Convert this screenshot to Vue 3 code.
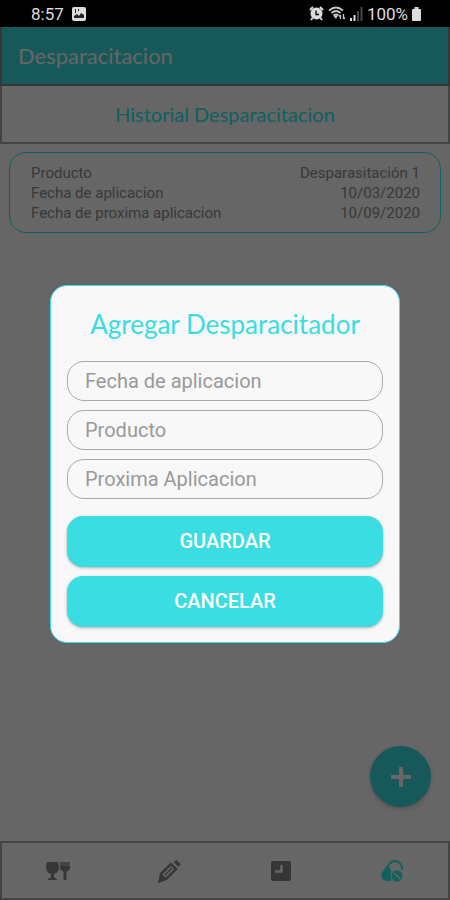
<template>
  <div class="screen">
    <div class="status-bar">
      <div class="status-left">
        <span>8:57</span>
        <svg width="14" height="14" viewBox="0 0 14 14">
          <rect width="14" height="14" rx="2" fill="#dcdcdc" />
          <path d="M2 11V9l3-2 2 2 2-3 3 2v3z" fill="#222" />
          <path d="M3 2h1v4H3zM6 2h1v2H6z" fill="#222" />
        </svg>
      </div>
      <div class="status-right">
        <svg width="15" height="15" viewBox="0 0 15 15" fill="none" stroke="#dcdcdc">
          <circle cx="7.5" cy="7.5" r="5" fill="#dcdcdc" stroke-width="2" />
          <path d="M1 4l3-3M11 1l3 3M3.5 12L2 14M11.5 12l1.500 2" stroke-width="2" />
          <path d="M7 4.500v4h3" stroke="#000" stroke-width="1.300" />
        </svg>
        <svg width="18" height="15" viewBox="0 0 18 15" fill="none" stroke="#c8c8c8" stroke-width="1.700">
          <path d="M1 4.500q7-6 14 0M3.500 7q4.500-4 9 0M5.500 9.500q2.500-2 5 0" />
          <path d="M8 13l-3-3.500h5z" fill="#c8c8c8" stroke="none" />
          <path d="M12.500 13V9M11 10.500L12.500 9M15.500 8v5M17 11.500L15.500 13" stroke-width="1.300" />
        </svg>
        <svg width="13" height="14" viewBox="0 0 13 14">
          <path d="M0 11h2v3H0zM3.500 8h2v6h-2z" fill="#dcdcdc" />
          <path d="M7 4h2v10H7zM10.500 0h2v14h-2z" fill="#484848" />
        </svg>
        <span>100%</span>
        <svg width="9" height="14" viewBox="0 0 9 14" fill="#dcdcdc">
          <path d="M2.500 0h4v2H8q1 0 1 1v10q0 1-1 1H1q-1 0-1-1V3q0-1 1-1h1.500z" />
        </svg>
      </div>
    </div>

    <div class="content">
      <header class="app-header">Desparacitacion</header>
      <h2 class="subtitle">Historial Desparacitacion</h2>

      <main class="list">
        <dl v-for="(item, i) in historial" :key="i" class="card">
          <div v-for="row in item" :key="row.label" class="card-row">
            <dt>{{ row.label }}</dt>
            <dd>{{ row.value }}</dd>
          </div>
        </dl>
        <button class="fab" aria-label="Agregar" @click="open = true">
          <svg width="20" height="20" viewBox="0 0 20 20">
            <path d="M10 0v20M0 10h20" stroke="#fff" stroke-width="4" />
          </svg>
        </button>
      </main>

      <nav class="tabs">
        <button aria-label="Comida">
          <svg width="24" height="20" viewBox="0 0 24 20" fill="currentColor">
            <path d="M1 1h11q1.500 5 .5 8-1 3-4.500 4v3.500q3 .5 3 2.500H2q0-2 3-2.500V13Q1.500 12 .5 9-.5 6 1 1z" />
            <path d="M14 4.500h10V7q0 2-3.500 3.500V19h-3v-8.500Q14 9 14 7z" />
            <path d="M14 1h10v3.500H14z" opacity="0.7" />
          </svg>
        </button>
        <button aria-label="Editar">
          <svg width="24" height="24" viewBox="0 0 24 24" fill="none" stroke="currentColor">
            <path d="M4 15L14 5l5 5L9 20l-6 2z" stroke-width="2.500" />
            <path d="M4 15l5 5-7 3zM8 16l7-7" fill="currentColor" stroke-width="1.500" />
            <path d="M18 2l4.500 4.500" stroke-width="3.500" />
          </svg>
        </button>
        <button aria-label="Citas">
          <svg width="20" height="20" viewBox="0 0 20 20">
            <rect width="20" height="20" rx="2" fill="currentColor" />
            <path d="M10.500 4v6.500H4" fill="none" stroke="#fff" stroke-width="2.500" />
          </svg>
        </button>
        <button class="active" aria-label="Desparacitacion">
          <svg width="22" height="22" viewBox="0 0 22 22">
            <path d="M8 5q2-4 6-4 6 .5 7 7v2" fill="none" stroke="currentColor" stroke-width="1.800" />
            <path d="M8 4q0 3 2 6 1 2-.5 5 0 3 1.500 5-3 1.500-6 1-4-1-4.500-5Q0 12 3 10q2-4 5-6z" fill="currentColor" />
            <circle cx="16" cy="16" r="5.500" fill="currentColor" />
            <path d="M13 13l6.500 6" stroke="#fff" stroke-width="1.500" />
          </svg>
        </button>
      </nav>

      <div v-if="open" class="overlay">
        <form class="modal" @submit.prevent="guardar">
          <h1>Agregar Desparacitador</h1>
          <div class="fields">
            <input v-model="form.fecha" type="text" placeholder="Fecha de aplicacion" aria-label="Fecha de aplicacion" />
            <input v-model="form.producto" type="text" placeholder="Producto" aria-label="Producto" />
            <input v-model="form.proxima" type="text" placeholder="Proxima Aplicacion" aria-label="Proxima Aplicacion" />
          </div>
          <div class="actions">
            <button type="submit">GUARDAR</button>
            <button type="button" @click="open = false">CANCELAR</button>
          </div>
        </form>
      </div>
    </div>
  </div>
</template>

<script setup>
import { ref, reactive } from 'vue'

const open = ref(true)
const form = reactive({ fecha: '', producto: '', proxima: '' })

function crearItem(producto, fecha, proxima) {
  return [
    { label: 'Producto', value: producto },
    { label: 'Fecha de aplicacion', value: fecha },
    { label: 'Fecha de proxima aplicacion', value: proxima }
  ]
}

const historial = ref([crearItem('Desparasitación 1', '10/03/2020', '10/09/2020')])

function guardar() {
  if (!form.producto.trim()) return
  historial.value.push(crearItem(form.producto, form.fecha, form.proxima))
  form.fecha = form.producto = form.proxima = ''
  open.value = false
}
</script>

<style>
body { margin: 0; background: #fff; }
</style>

<style scoped>
* { box-sizing: border-box; }
.screen { min-height: 100vh; display: flex; flex-direction: column; font-family: Roboto, "Liberation Sans", sans-serif; }
button { font-family: inherit; border: none; cursor: pointer; }
svg { display: block; }

.status-bar { height: 27px; padding: 0 29px 0 31px; display: flex; justify-content: space-between; align-items: center; background: #000; color: #dcdcdc; font-size: 17px; }
.status-left, .status-right { display: flex; align-items: center; }
.status-left { gap: 8px; }
.status-right { gap: 4px; }

.content { flex: 1; position: relative; display: flex; flex-direction: column; }
.app-header { height: 59px; padding: 0 16px; display: flex; align-items: center; background: #3adde1; color: #fff; border: 2px solid #888; border-top: none; font-family: Lato, sans-serif; font-size: 22px; }
.subtitle { margin: 0; height: 58px; display: flex; align-items: center; justify-content: center; border: 2px solid #aaa; border-top: none; color: #28f0ec; font-family: Lato, sans-serif; font-size: 20px; font-weight: 400; }

.list { flex: 1; padding: 8px 9px; display: flex; flex-direction: column; gap: 8px; }
.card { margin: 0; padding: 10px 20px 9px 21px; border: 1px solid #28f0ec; border-radius: 17px; color: #8c8c8c; font-size: 15px; line-height: 20px; }
.card-row { display: flex; justify-content: space-between; }
.card-row dd { margin: 0; }
.fab { margin: auto 10px 26px auto; width: 61px; height: 61px; padding: 0; border-radius: 50%; display: flex; align-items: center; justify-content: center; background: #3adde1; box-shadow: 0 2px 5px rgba(0, 0, 0, 0.2); }

.tabs { height: 59px; display: flex; border: 2px solid #aaa; }
.tabs button { flex: 1; display: flex; align-items: center; justify-content: center; background: none; color: #888; }
.tabs .active { color: #28f0ec; }

.overlay { position: absolute; inset: 0; display: flex; align-items: center; background: rgba(0, 0, 0, 0.6); padding: 0 50px; }
.modal { flex: 1; padding: 16px 16px 15px; border: 1px solid #3adde1; border-radius: 17px; background: #f8f8f8; }
.modal h1 { margin: 0 0 15px; text-align: center; color: #3adde1; font-family: Lato, sans-serif; font-size: 26px; line-height: 44px; font-weight: 400; }
.fields { display: flex; flex-direction: column; gap: 9px; }
.fields input { width: 100%; height: 40px; padding: 0 17px; border: 1px solid #aaa; border-radius: 17px; outline: none; background: transparent; color: #333; font-family: inherit; font-size: 20px; }
.fields input::placeholder { color: #999; opacity: 1; }
.actions { margin-top: 17px; display: flex; flex-direction: column; gap: 9px; }
.actions button { height: 51px; border-radius: 16px; background: #3adde1; color: #fff; font-size: 20px; font-weight: 500; box-shadow: 0 1px 3px rgba(0, 0, 0, 0.3); }
</style>
